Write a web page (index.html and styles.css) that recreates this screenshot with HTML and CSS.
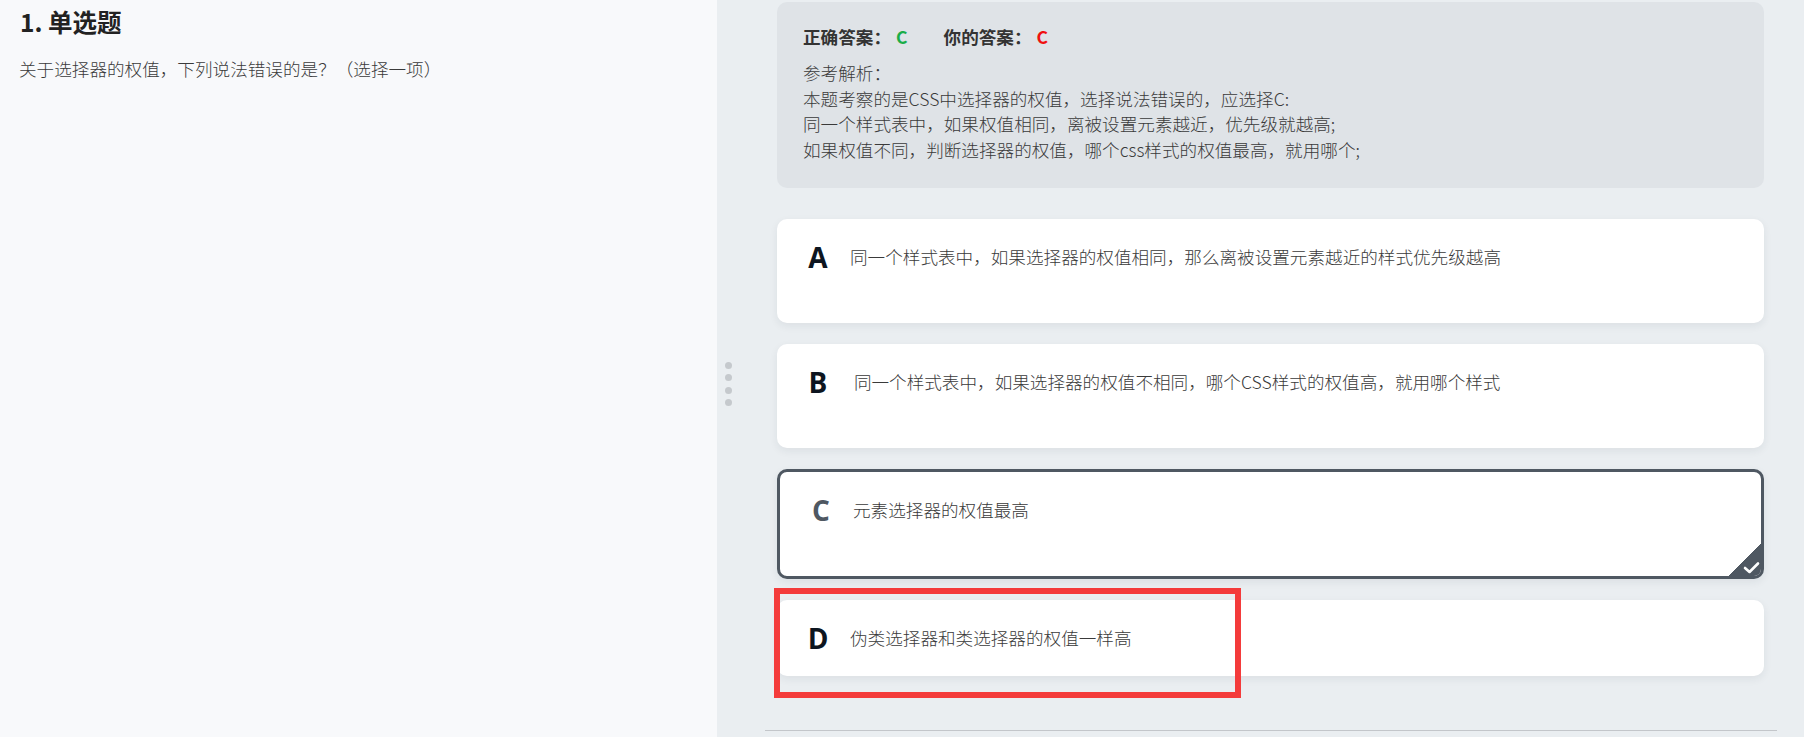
FILE: index.html
```html
<!DOCTYPE html>
<html lang="zh-CN">
<head>
<meta charset="utf-8">
<title>单选题</title>
<link rel="stylesheet" href="styles.css">
</head>
<body>
<div class="page">
  <section class="question-pane">
    <h2 class="q-title">1. 单选题</h2>
    <p class="q-stem">关于选择器的权值，下列说法错误的是？（选择一项）</p>
  </section>

  <div class="splitter">
    <span class="dot"></span>
    <span class="dot"></span>
    <span class="dot"></span>
    <span class="dot"></span>
  </div>

  <section class="answer-pane">
    <div class="analysis">
      <div class="answer-row">
        <span class="answer-label">正确答案：</span><span class="answer-value correct">C</span>
        <span class="answer-label mine">你的答案：</span><span class="answer-value wrong">C</span>
      </div>
      <div class="analysis-body">
        <p>参考解析：</p>
        <p>本题考察的是CSS中选择器的权值，选择说法错误的，应选择C:</p>
        <p>同一个样式表中，如果权值相同，离被设置元素越近，优先级就越高;</p>
        <p>如果权值不同，判断选择器的权值，哪个css样式的权值最高，就用哪个;</p>
      </div>
    </div>

    <ul class="options">
      <li class="option">
        <span class="opt-letter">A</span>
        <div class="opt-text"><p>同一个样式表中，如果选择器的权值相同，那么离被设置元素越近的样式优先级越高</p><p><br></p></div>
      </li>
      <li class="option">
        <span class="opt-letter">B</span>
        <div class="opt-text"><p>&nbsp;同一个样式表中，如果选择器的权值不相同，哪个CSS样式的权值高，就用哪个样式</p><p><br></p></div>
      </li>
      <li class="option option-selected">
        <span class="opt-letter">C</span>
        <div class="opt-text"><p>元素选择器的权值最高</p><p><br></p></div>
        <span class="check-badge">
          <svg width="32" height="32" viewBox="0 0 32 32"><path d="M16 24 L20.5 28 L29 19.5" fill="none" stroke="#ffffff" stroke-width="2.6" stroke-linecap="round" stroke-linejoin="round"/></svg>
        </span>
      </li>
      <li class="option">
        <span class="opt-letter">D</span>
        <div class="opt-text"><p>伪类选择器和类选择器的权值一样高</p></div>
      </li>
    </ul>

    <hr class="divider">
  </section>

  <div class="annotation"></div>
</div>
</body>
</html>
```

FILE: styles.css
```css
* {
  box-sizing: border-box;
}

html, body {
  margin: 0;
  padding: 0;
}

body {
  width: 1804px;
  height: 737px;
  overflow: hidden;
  font-family: "Noto Sans CJK SC", "Noto Sans", sans-serif;
  color: #333333;
}

.page {
  position: relative;
  display: flex;
  width: 1804px;
  height: 737px;
}

.question-pane {
  width: 717px;
  flex: none;
  background: #f8f9fb;
  padding: 6px 20px 0 19px;
}

.q-title {
  margin: 0;
  font-size: 24.5px;
  line-height: 32px;
  font-weight: 700;
  color: #222222;
  padding-left: 1px;
}

.q-stem {
  margin: 18px 0 0;
  font-size: 17.6px;
  line-height: 26px;
  font-weight: 300;
  color: #3a3a3a;
}

.splitter {
  width: 22px;
  flex: none;
  background: #eaeef1;
  display: flex;
  flex-direction: column;
  align-items: center;
  gap: 5.3px;
  padding-top: 362px;
}

.dot {
  width: 7px;
  height: 7px;
  border-radius: 50%;
  background: #c5c9cd;
}

.answer-pane {
  flex: 1;
  background: #eaeef1;
  padding: 2px 40px 0 38px;
}

.analysis {
  background: #dfe3e7;
  border-radius: 10px;
  padding: 22px 26px 26px 26px;
}

.answer-row {
  font-size: 17.6px;
  line-height: 26px;
  font-weight: 700;
  color: #333333;
  display: flex;
}

.answer-label.mine {
  margin-left: 36px;
}

.answer-value {
  margin-left: 5px;
}

.answer-value.correct {
  color: #1aad49;
}

.answer-value.wrong {
  color: #f01010;
}

.analysis-body {
  margin-top: 10px;
  font-size: 17.6px;
  line-height: 25.5px;
  font-weight: 300;
  color: #3a3a3a;
}

.analysis-body p {
  margin: 0;
}

.options {
  list-style: none;
  margin: 31px 0 0;
  padding: 0;
  display: flex;
  flex-direction: column;
  gap: 21px;
}

.option {
  position: relative;
  overflow: hidden;
  display: flex;
  align-items: flex-start;
  background: #ffffff;
  border-radius: 10px;
  padding: 24px 28px 24px 28px;
  box-shadow: 0 3px 8px rgba(30, 40, 60, 0.07);
}

.opt-letter {
  width: 26px;
  flex: none;
  text-align: center;
  font-family: "Open Sans", "Noto Sans", sans-serif;
  font-size: 28px;
  line-height: 28px;
  font-weight: 700;
  color: #0d1520;
  margin-right: 19px;
}

.opt-text {
  font-size: 17.6px;
  line-height: 28px;
  font-weight: 300;
  color: #3a3a3a;
}

.opt-text p {
  margin: 0;
}

.option-selected {
  border: 3px solid #4f5862;
}

.option-selected .opt-letter {
  color: #4f5862;
}

.check-badge {
  position: absolute;
  right: 0;
  bottom: 0;
  width: 32px;
  height: 32px;
  background: linear-gradient(135deg, transparent 50%, #4f5862 50%);
}

.check-badge svg {
  display: block;
}

.divider {
  margin: 54px -13px 0 -12px;
  border: 0;
  border-top: 1px solid #c3c6ca;
  height: 0;
}

.annotation {
  position: absolute;
  left: 774px;
  top: 588px;
  width: 467px;
  height: 110px;
  border: 6px solid #f43b3b;
}
```
